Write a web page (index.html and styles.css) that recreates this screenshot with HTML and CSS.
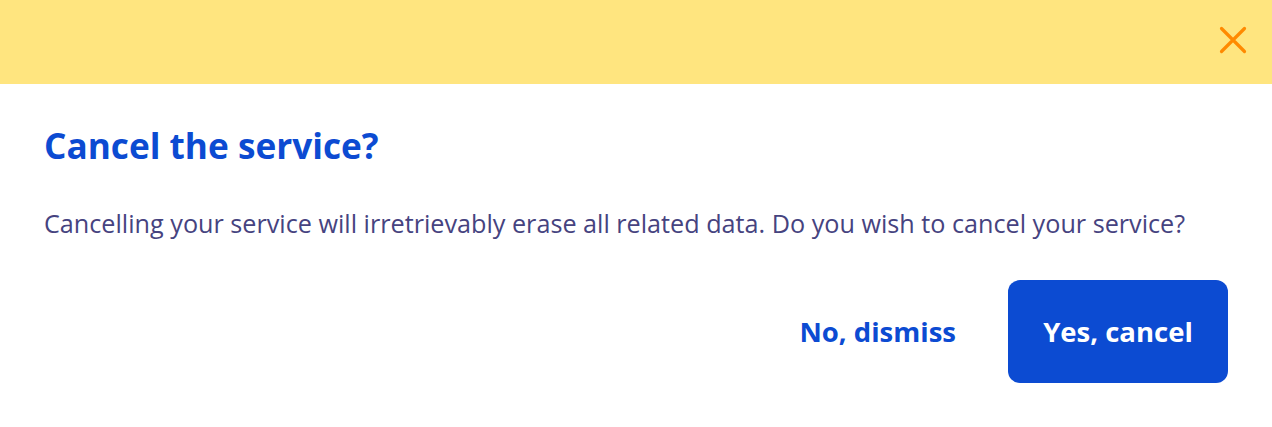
FILE: index.html
```html
<!DOCTYPE html>
<html lang="en">

<head>
    <meta charset="UTF-8">
    <title>Cancel the service</title>
    <link rel="stylesheet" href="styles.css">
</head>

<body>

    <!-- Modal -->
    <div class="modal">
        <div class="modal-header">
            <button class="close-btn" aria-label="Close">
                <svg width="28" height="28" viewBox="0 0 28 28">
                    <path d="M2.5 2.5 L25.5 25.5 M25.5 2.5 L2.5 25.5" stroke="#ff8a00" stroke-width="3.2" stroke-linecap="round" fill="none"/>
                </svg>
            </button>
        </div>

        <div class="modal-body">
            <h2 class="modal-title">Cancel the service?</h2>
            <p class="modal-text">Cancelling your service will irretrievably erase all related data. Do you wish to cancel your service?</p>
        </div>

        <div class="modal-actions">
            <button class="btn btn-link">No, dismiss</button>
            <button class="btn btn-primary">Yes, cancel</button>
        </div>
    </div>

</body>

</html>
```

FILE: styles.css
```css
body {
    margin: 0;
    padding: 0;
    background-color: #fff;
    font-family: "Source Sans Pro", "Open Sans", sans-serif;
}

/* Modal */
.modal {
    width: 1272px;
    height: 427px;
    display: flex;
    flex-direction: column;
}

.modal-header {
    height: 84px;
    background-color: #ffe57f;
    display: flex;
    justify-content: flex-end;
    align-items: center;
    padding-right: 25px;
}

.close-btn {
    background: none;
    border: none;
    padding: 0;
    margin-bottom: 4px;
    width: 28px;
    height: 28px;
    cursor: pointer;
}

.close-btn svg {
    display: block;
}

.modal-body {
    padding: 39px 44px 0;
}

.modal-title {
    margin: 0;
    color: #0c4bd2;
    font-size: 35.2px;
    font-weight: 700;
    line-height: 44px;
}

.modal-text {
    margin: 40px 0 0;
    color: #46437f;
    font-size: 25.2px;
    line-height: 32px;
    white-space: nowrap;
}

/* Buttons */
.modal-actions {
    display: flex;
    justify-content: flex-end;
    align-items: center;
    gap: 52px;
    padding: 41px 44px 0;
}

.btn {
    font-family: inherit;
    font-size: 27.5px;
    font-weight: 700;
    border: none;
    cursor: pointer;
}

.btn-link {
    background: none;
    color: #0c4bd2;
    padding: 0;
}

.btn-primary {
    background-color: #0c4bd2;
    color: #fff;
    width: 220px;
    height: 103px;
    border-radius: 12px;
}
```
